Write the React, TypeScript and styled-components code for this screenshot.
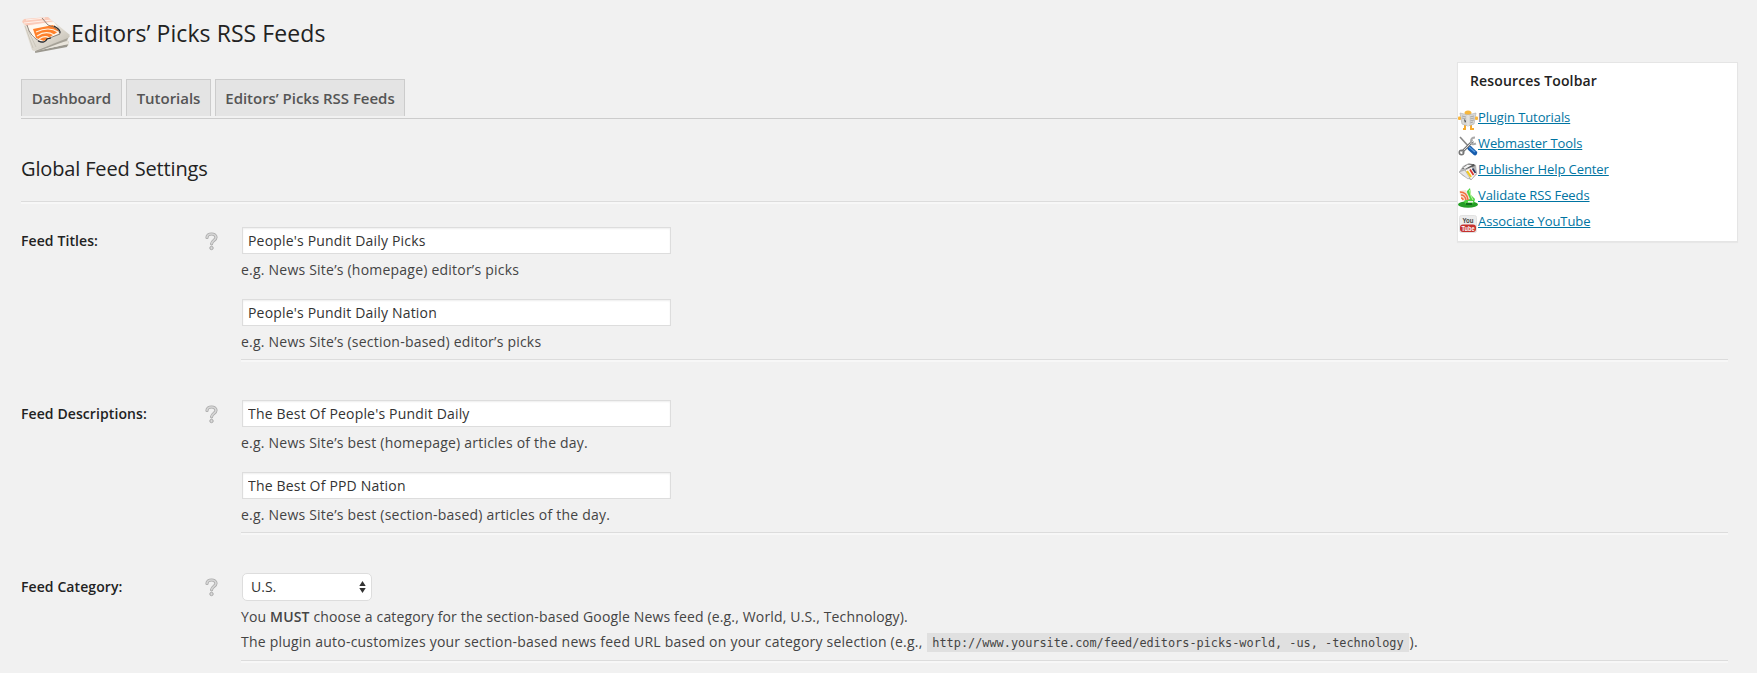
import React from "react";
import styled, { createGlobalStyle } from "styled-components";

const GlobalStyle = createGlobalStyle`
  *, *::before, *::after { box-sizing: border-box; }
  body {
    margin: 0;
    background: #f1f1f1;
    color: #444;
    font: 14px/20px "Open Sans", sans-serif;
    overflow: hidden;
  }
`;

const Page = styled.div`
  position: relative;
  height: 673px;
  padding: 0 29px 0 21px;
  overflow: hidden;
`;

const Header = styled.header`
  display: flex;
  align-items: flex-start;
  height: 79px;
  padding-top: 14px;
`;

const Title = styled.h1`
  margin: 3px 0 0 1px;
  color: #222;
  font-size: 23px;
  font-weight: 400;
  letter-spacing: 0.07px;
  line-height: 32px;
  white-space: nowrap;
`;

const Tabs = styled.nav`
  display: flex;
  gap: 4px;
  height: 40px;
  border-bottom: 1px solid #ccc;
`;

const Tab = styled.a<{ $width: number }>`
  width: ${(p) => p.$width}px;
  height: 37px;
  border: 1px solid #ccc;
  border-bottom: 0;
  background: #e4e4e4;
  color: #555;
  font-size: 15px;
  font-weight: 600;
  letter-spacing: -0.03px;
  line-height: 37px;
  text-align: center;
  white-space: nowrap;
`;

const SectionTitle = styled.h2`
  margin: 0;
  padding-top: 37px;
  height: 82px;
  color: #222;
  font-size: 20px;
  font-weight: 400;
  letter-spacing: -0.15px;
  line-height: 26px;
`;

const Rule = styled.hr`
  margin: 0;
  border: 0;
  height: 3px;
  border-top: 1px solid #dcdcdc;
  border-bottom: 2px solid #f7f7f7;
`;

const Row = styled.section<{ $top: number }>`
  display: grid;
  grid-template-columns: 183px 37px 1fr;
  padding-top: ${(p) => p.$top}px;
`;

const Label = styled.label`
  padding-top: 4px;
  color: #222;
  font-weight: 600;
  letter-spacing: 0.09px;
`;

const HelpSlot = styled.span`
  padding-top: 5px;
  height: 25px;
`;

const Field = styled.div<{ $gap: number }>`
  margin-bottom: ${(p) => p.$gap}px;
`;

const TextInput = styled.input`
  display: block;
  width: 429px;
  height: 27px;
  margin: 0 0 0 1px;
  padding: 0 5px 1px;
  border: 1px solid #ddd;
  border-radius: 0;
  background: #fff;
  box-shadow: inset 0 1px 2px rgba(0, 0, 0, 0.07);
  color: #333;
  font: 14px "Open Sans", sans-serif;
  letter-spacing: 0.18px;
`;

const Hint = styled.p`
  margin: 0;
  padding-top: 6px;
  letter-spacing: 0.22px;
  line-height: 20px;
  white-space: nowrap;
`;

const SelectBox = styled.div`
  display: grid;
  align-items: center;
  width: 130px;
  height: 28px;
  margin: 0 0 3px 1px;
  > * { grid-area: 1 / 1; }
  > svg { justify-self: end; margin-right: 6px; pointer-events: none; }
`;

const Select = styled.select`
  appearance: none;
  width: 130px;
  height: 28px;
  padding: 0 8px 1px;
  border: 1px solid #ddd;
  border-radius: 5px;
  background: #fff;
  color: #333;
  font: 14px "Open Sans", sans-serif;
`;

const Paragraph = styled.p<{ $spacing: number }>`
  margin: 0;
  letter-spacing: ${(p) => p.$spacing}px;
  line-height: 25px;
  white-space: nowrap;
  strong { font-weight: 600; }
`;

const Code = styled.code`
  margin: 0 1px;
  padding: 3px 5px 2px;
  background: #e0e0e0;
  font: 11.87px/13px "DejaVu Sans Mono", monospace;
  letter-spacing: 0;
`;

const Toolbar = styled.aside`
  position: absolute;
  top: 62px;
  left: 1457px;
  width: 281px;
  height: 180px;
  border: 1px solid #e5e5e5;
  background: #fff;
  box-shadow: 0 1px 1px rgba(0, 0, 0, 0.04);
`;

const ToolbarTitle = styled.h3`
  margin: 0;
  padding: 8px 12px 0;
  height: 41px;
  color: #222;
  font-size: 14px;
  font-weight: 600;
  letter-spacing: 0.14px;
  line-height: 20px;
`;

const Links = styled.ul`
  margin: 0;
  padding: 0;
  list-style: none;
`;

const LinkItem = styled.li`
  display: flex;
  height: 26px;
  > svg { flex: none; margin: 6px 0 0 0; overflow: visible; }
`;

const Link = styled.a`
  color: #0074a2;
  font-size: 13px;
  letter-spacing: -0.09px;
  line-height: 26px;
  text-decoration: underline;
  white-space: nowrap;
`;

const FeedLogo = () => (
  <svg width="49" height="40" viewBox="0 0 49 40">
    <defs>
      <linearGradient id="paper" x1="0" y1="0" x2="1" y2="1">
        <stop offset="0" stopColor="#f0ebe2" />
        <stop offset=".6" stopColor="#dcd7cd" />
        <stop offset="1" stopColor="#bab6ab" />
      </linearGradient>
    </defs>
    <path d="M14 32 44 19 49 22 46 26 48 28 47 32Z" fill="#cbc7bc" />
    <path d="M15 37 47 30 46 33 14 39Z" fill="#9a978e" />
    <path d="M14 34 47 27 48 30 15 37Z" fill="#e9e5dc" />
    <path d="M1 6 27 3 49 21 44 25 13 37 11 36Z" fill="url(#paper)" />
    <path d="m14 37 33-13-1 2.500-32 12Z" fill="#a5a197" />
    <path d="M4 12l8 22M7 16l8 17" stroke="#c5c0b5" strokeWidth=".8" />
    <path d="M1 8 3 5 27 3 33 9 7 13Z" fill="#fbcbb9" />
    <path d="M3 9 31 6M6 12 32 8M5 6l19-2" stroke="#fff0e9" strokeWidth="1" />
    <path d="M6 12 33 8 40 18 21 29 11 23Z" fill="#fff8ef" />
    <path d="M12 15 32 11 38 17 23 27 15 24Z" fill="#ff812c" />
    <path d="M15 18q13-6 22 0M16 22q9-6 17-1M18 25q6-4 10-1" fill="none" stroke="#fff2df" strokeWidth="1.200" />
    <path d="M6 11q3 12 14 17 4 1 6-3l13-5q-1-6-12-9l-6-7" fill="none" stroke="#746b64" strokeWidth=".8" />
    <path d="M17 27q7 3 9-2l4-1M33 12q7 4 6 7" fill="none" stroke="#25282d" strokeWidth="1.200" />
  </svg>
);

const HelpIcon = () => (
  <svg width="15" height="19" viewBox="0 0 15 19" fill="none">
    <path d="M3 5.5C3 1 12 .8 12 5.3c0 3.1-4.4 3.2-4.4 6.5" stroke="#aaa" strokeWidth="3.2" strokeLinecap="round" />
    <path d="M3 5.5C3 1 12 .8 12 5.3c0 3.1-4.4 3.2-4.4 6.5" stroke="#d6d6d6" strokeWidth="1.6" strokeLinecap="round" />
    <circle cx="7.5" cy="16" r="1.7" fill="#d8d8d8" stroke="#aaa" />
  </svg>
);

const ReaderIcon = () => (
  <svg width="20" height="20" viewBox="0 0 20 20">
    <ellipse cx="10" cy="3" rx="3.500" ry="2.500" fill="#f6b73e" />
    <path d="M7 15v4H5M13 15v4h3" fill="none" stroke="#f6ab2f" strokeWidth="2" />
    <path d="m2 3 8 2v11l-6-2ZM18 3l-8 2v11l6-2Z" fill="#d9d9d6" stroke="#b4b4b4" strokeWidth=".7" />
    <path d="m4 6 4 1M4 8l4 1M12 7l4-1M12 9l4-1M12 11l4-1M12 13l3-1" stroke="#aaa" />
    <path d="m6 9 2 2-1 2Z" fill="#333" />
    <path d="M10 5v11" stroke="#fff" />
    <rect x="0" y="6.500" width="3" height="3.500" rx="1" fill="#f8b53b" />
    <rect x="17" y="6.500" width="3" height="3.500" rx="1" fill="#f8b53b" />
  </svg>
);

const ToolsIcon = () => (
  <svg width="20" height="20" viewBox="0 0 20 20" fill="none">
    <path d="m2 1 10 11" stroke="#888" strokeWidth="1.6" />
    <path d="m11.500 12 5.500 5" stroke="#175cad" strokeWidth="4.500" strokeLinecap="round" />
    <path d="m11 11 6 5" stroke="#559be0" strokeWidth="1.5" />
    <path d="m4 16 11-11" stroke="#777" strokeWidth="2.600" />
    <path d="m4 16 11-11" stroke="#ddd" strokeWidth="1" />
    <path d="M17 1.5q-4 0-4 4t5 2" stroke="#aaa" strokeWidth="2" />
    <circle cx="3.5" cy="16.5" r="2.2" stroke="#777" strokeWidth="1.6" />
  </svg>
);

const PublisherIcon = () => (
  <svg width="20" height="20" viewBox="0 0 20 20">
    <path d="m1 10 4-6 6-3 7 2 1 9-6 6-8-4Z" fill="#b5b5b5" />
    <path d="m4 7 4-4 8-1 1 2-9 3Z" fill="#555" />
    <path d="m5 6 4-3 5 0-7 4Z" fill="#f4f4f4" />
    <path d="m1 10 6-2 6 7-3 2Z" fill="#e6e6e6" stroke="#999" strokeWidth=".5" />
    <path d="m7 8 7-3 5 6-6 7Z" fill="#faf8f4" stroke="#888" strokeWidth=".5" />
    <path d="m9 9 4 6" stroke="#f1c91e" strokeWidth="2.2" />
    <path d="m12 7.500 3.500 5.500" stroke="#d93932" strokeWidth="1.8" />
    <path d="m14.500 6.500 3 4.500" stroke="#26345c" strokeWidth="1.6" />
  </svg>
);

const ValidateIcon = () => (
  <svg width="20" height="20" viewBox="0 0 20 20">
    <ellipse cx="10" cy="16.500" rx="10" ry="3.2" fill="#249e26" />
    <path d="m9 3 3-3 1 7 4 4-1 4-7 2-3-3Z" fill="#4fd343" />
    <path d="m1 3 7-1 4 9-8 2Z" fill="#f6e2d6" />
    <path d="M2 4q7 0 8 8M3 7q4 0 5 5M3 10q2 0 2 2" fill="none" stroke="#f26e3f" strokeWidth="1.5" />
    <path d="m11.500 2 1.500 6 2 4" fill="none" stroke="#c6f6ac" />
    <path d="M8 15h6v2H8z" fill="#116d1a" />
    <path d="M10 13h5v1.500h-5z" fill="#eee" />
  </svg>
);

const YouTag = styled.text`
  font: 700 7.5px "Liberation Sans", sans-serif;
`;

const TubeIcon = () => (
  <svg width="20" height="20" viewBox="0 0 20 20">
    <rect x="1.5" y="1.5" width="17" height="17" rx="2" fill="#ececec" stroke="#e2e2e2" />
    <rect x="2" y="10.500" width="16" height="7.500" rx="3" fill="#c5312e" />
    <YouTag x="4.500" y="8.8" fill="#444" textLength="11" lengthAdjust="spacingAndGlyphs">You</YouTag>
    <YouTag x="3.500" y="17" fill="#fff" textLength="13" lengthAdjust="spacingAndGlyphs">Tube</YouTag>
  </svg>
);

const resources = [
  { name: "Plugin Tutorials", Icon: ReaderIcon },
  { name: "Webmaster Tools", Icon: ToolsIcon },
  { name: "Publisher Help Center", Icon: PublisherIcon },
  { name: "Validate RSS Feeds", Icon: ValidateIcon },
  { name: "Associate YouTube", Icon: TubeIcon },
];

const textRows = [
  {
    label: "Feed Titles:",
    top: 23,
    fields: [
      { value: "People's Pundit Daily Picks", hint: "e.g. News Site’s (homepage) editor’s picks" },
      { value: "People's Pundit Daily Nation", hint: "e.g. News Site’s (section-based) editor’s picks" },
    ],
  },
  {
    label: "Feed Descriptions:",
    top: 38,
    fields: [
      { value: "The Best Of People's Pundit Daily", hint: "e.g. News Site’s best (homepage) articles of the day." },
      { value: "The Best Of PPD Nation", hint: "e.g. News Site’s best (section-based) articles of the day." },
    ],
  },
];

export default function App() {
  return (
    <Page>
      <GlobalStyle />
      <Header>
        <FeedLogo />
        <Title>Editors’ Picks RSS Feeds</Title>
      </Header>
      <Tabs>
        <Tab $width={101}>Dashboard</Tab>
        <Tab $width={85}>Tutorials</Tab>
        <Tab $width={190}>Editors’ Picks RSS Feeds</Tab>
      </Tabs>
      <SectionTitle>Global Feed Settings</SectionTitle>
      <Rule />
      {textRows.map((row) => (
        <Row key={row.label} $top={row.top}>
          <Label>{row.label}</Label>
          <HelpSlot><HelpIcon /></HelpSlot>
          <div>
            {row.fields.map((f, i) => (
              <Field key={f.value} $gap={i === 0 ? 19 : 7}>
                <TextInput defaultValue={f.value} />
                <Hint>{f.hint}</Hint>
              </Field>
            ))}
            <Rule />
          </div>
        </Row>
      ))}
      <Row $top={38}>
        <Label>Feed Category:</Label>
        <HelpSlot><HelpIcon /></HelpSlot>
        <div>
          <Field $gap={6}>
            <SelectBox>
              <Select defaultValue="us"><option value="us">U.S.</option></Select>
              <svg width="7" height="12" viewBox="0 0 7 12"><path d="M3.5 0 6.7 5H.3ZM.3 7h6.400l-3.200 5Z" fill="#333" /></svg>
            </SelectBox>
            <Paragraph $spacing={0.155}>
              You <strong>MUST</strong> choose a category for the section-based Google News feed (e.g., World, U.S., Technology).
            </Paragraph>
            <Paragraph $spacing={0.22}>
              The plugin auto-customizes your section-based news feed URL based on your category selection (e.g., <Code>http://www.yoursite.com/feed/editors-picks-world, -us, -technology</Code>).
            </Paragraph>
          </Field>
          <Rule />
        </div>
      </Row>
      <Toolbar>
        <ToolbarTitle>Resources Toolbar</ToolbarTitle>
        <Links>
          {resources.map(({ name, Icon }) => (
            <LinkItem key={name}><Icon /><Link>{name}</Link></LinkItem>
          ))}
        </Links>
      </Toolbar>
    </Page>
  );
}
